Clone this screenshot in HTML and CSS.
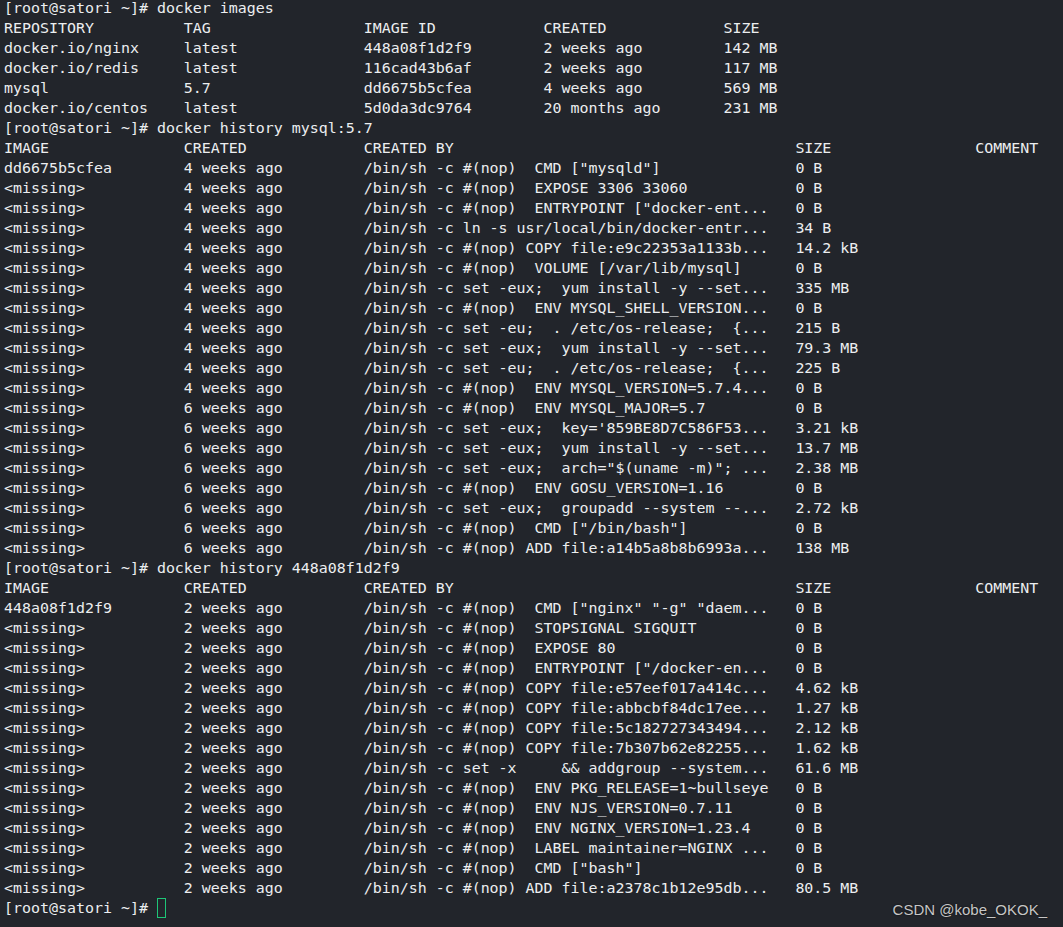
FILE: index.html
```html
<!DOCTYPE html>
<html lang="en">
<head>
  <meta charset="UTF-8" />
  <meta name="viewport" content="width=device-width, initial-scale=1.0" />
  <title>Terminal - docker</title>
  <link rel="stylesheet" href="styles.css">
</head>
<body>
  <div class="term">
    <!-- docker images -->
    <div class="line">[root@satori ~]# docker images</div>
    <div class="row images"><span>REPOSITORY</span><span>TAG</span><span>IMAGE ID</span><span>CREATED</span><span>SIZE</span></div>
    <div class="row images"><span>docker.io/nginx</span><span>latest</span><span>448a08f1d2f9</span><span>2 weeks ago</span><span>142 MB</span></div>
    <div class="row images"><span>docker.io/redis</span><span>latest</span><span>116cad43b6af</span><span>2 weeks ago</span><span>117 MB</span></div>
    <div class="row images"><span>mysql</span><span>5.7</span><span>dd6675b5cfea</span><span>4 weeks ago</span><span>569 MB</span></div>
    <div class="row images"><span>docker.io/centos</span><span>latest</span><span>5d0da3dc9764</span><span>20 months ago</span><span>231 MB</span></div>

    <!-- history mysql -->
    <div class="line">[root@satori ~]# docker history mysql:5.7</div>
    <div class="row history"><span>IMAGE</span><span>CREATED</span><span>CREATED BY</span><span>SIZE</span><span>COMMENT</span></div>
    <div class="row history"><span>dd6675b5cfea</span><span>4 weeks ago</span><span>/bin/sh -c #(nop)  CMD ["mysqld"]</span><span>0 B</span></div>
    <div class="row history"><span>&lt;missing&gt;</span><span>4 weeks ago</span><span>/bin/sh -c #(nop)  EXPOSE 3306 33060</span><span>0 B</span></div>
    <div class="row history"><span>&lt;missing&gt;</span><span>4 weeks ago</span><span>/bin/sh -c #(nop)  ENTRYPOINT ["docker-ent...</span><span>0 B</span></div>
    <div class="row history"><span>&lt;missing&gt;</span><span>4 weeks ago</span><span>/bin/sh -c ln -s usr/local/bin/docker-entr...</span><span>34 B</span></div>
    <div class="row history"><span>&lt;missing&gt;</span><span>4 weeks ago</span><span>/bin/sh -c #(nop) COPY file:e9c22353a1133b...</span><span>14.2 kB</span></div>
    <div class="row history"><span>&lt;missing&gt;</span><span>4 weeks ago</span><span>/bin/sh -c #(nop)  VOLUME [/var/lib/mysql]</span><span>0 B</span></div>
    <div class="row history"><span>&lt;missing&gt;</span><span>4 weeks ago</span><span>/bin/sh -c set -eux;  yum install -y --set...</span><span>335 MB</span></div>
    <div class="row history"><span>&lt;missing&gt;</span><span>4 weeks ago</span><span>/bin/sh -c #(nop)  ENV MYSQL_SHELL_VERSION...</span><span>0 B</span></div>
    <div class="row history"><span>&lt;missing&gt;</span><span>4 weeks ago</span><span>/bin/sh -c set -eu;  . /etc/os-release;  {...</span><span>215 B</span></div>
    <div class="row history"><span>&lt;missing&gt;</span><span>4 weeks ago</span><span>/bin/sh -c set -eux;  yum install -y --set...</span><span>79.3 MB</span></div>
    <div class="row history"><span>&lt;missing&gt;</span><span>4 weeks ago</span><span>/bin/sh -c set -eu;  . /etc/os-release;  {...</span><span>225 B</span></div>
    <div class="row history"><span>&lt;missing&gt;</span><span>4 weeks ago</span><span>/bin/sh -c #(nop)  ENV MYSQL_VERSION=5.7.4...</span><span>0 B</span></div>
    <div class="row history"><span>&lt;missing&gt;</span><span>6 weeks ago</span><span>/bin/sh -c #(nop)  ENV MYSQL_MAJOR=5.7</span><span>0 B</span></div>
    <div class="row history"><span>&lt;missing&gt;</span><span>6 weeks ago</span><span>/bin/sh -c set -eux;  key='859BE8D7C586F53...</span><span>3.21 kB</span></div>
    <div class="row history"><span>&lt;missing&gt;</span><span>6 weeks ago</span><span>/bin/sh -c set -eux;  yum install -y --set...</span><span>13.7 MB</span></div>
    <div class="row history"><span>&lt;missing&gt;</span><span>6 weeks ago</span><span>/bin/sh -c set -eux;  arch="$(uname -m)"; ...</span><span>2.38 MB</span></div>
    <div class="row history"><span>&lt;missing&gt;</span><span>6 weeks ago</span><span>/bin/sh -c #(nop)  ENV GOSU_VERSION=1.16</span><span>0 B</span></div>
    <div class="row history"><span>&lt;missing&gt;</span><span>6 weeks ago</span><span>/bin/sh -c set -eux;  groupadd --system --...</span><span>2.72 kB</span></div>
    <div class="row history"><span>&lt;missing&gt;</span><span>6 weeks ago</span><span>/bin/sh -c #(nop)  CMD ["/bin/bash"]</span><span>0 B</span></div>
    <div class="row history"><span>&lt;missing&gt;</span><span>6 weeks ago</span><span>/bin/sh -c #(nop) ADD file:a14b5a8b8b6993a...</span><span>138 MB</span></div>

    <!-- history nginx -->
    <div class="line">[root@satori ~]# docker history 448a08f1d2f9</div>
    <div class="row history"><span>IMAGE</span><span>CREATED</span><span>CREATED BY</span><span>SIZE</span><span>COMMENT</span></div>
    <div class="row history"><span>448a08f1d2f9</span><span>2 weeks ago</span><span>/bin/sh -c #(nop)  CMD ["nginx" "-g" "daem...</span><span>0 B</span></div>
    <div class="row history"><span>&lt;missing&gt;</span><span>2 weeks ago</span><span>/bin/sh -c #(nop)  STOPSIGNAL SIGQUIT</span><span>0 B</span></div>
    <div class="row history"><span>&lt;missing&gt;</span><span>2 weeks ago</span><span>/bin/sh -c #(nop)  EXPOSE 80</span><span>0 B</span></div>
    <div class="row history"><span>&lt;missing&gt;</span><span>2 weeks ago</span><span>/bin/sh -c #(nop)  ENTRYPOINT ["/docker-en...</span><span>0 B</span></div>
    <div class="row history"><span>&lt;missing&gt;</span><span>2 weeks ago</span><span>/bin/sh -c #(nop) COPY file:e57eef017a414c...</span><span>4.62 kB</span></div>
    <div class="row history"><span>&lt;missing&gt;</span><span>2 weeks ago</span><span>/bin/sh -c #(nop) COPY file:abbcbf84dc17ee...</span><span>1.27 kB</span></div>
    <div class="row history"><span>&lt;missing&gt;</span><span>2 weeks ago</span><span>/bin/sh -c #(nop) COPY file:5c182727343494...</span><span>2.12 kB</span></div>
    <div class="row history"><span>&lt;missing&gt;</span><span>2 weeks ago</span><span>/bin/sh -c #(nop) COPY file:7b307b62e82255...</span><span>1.62 kB</span></div>
    <div class="row history"><span>&lt;missing&gt;</span><span>2 weeks ago</span><span>/bin/sh -c set -x     &amp;&amp; addgroup --system...</span><span>61.6 MB</span></div>
    <div class="row history"><span>&lt;missing&gt;</span><span>2 weeks ago</span><span>/bin/sh -c #(nop)  ENV PKG_RELEASE=1~bullseye</span><span>0 B</span></div>
    <div class="row history"><span>&lt;missing&gt;</span><span>2 weeks ago</span><span>/bin/sh -c #(nop)  ENV NJS_VERSION=0.7.11</span><span>0 B</span></div>
    <div class="row history"><span>&lt;missing&gt;</span><span>2 weeks ago</span><span>/bin/sh -c #(nop)  ENV NGINX_VERSION=1.23.4</span><span>0 B</span></div>
    <div class="row history"><span>&lt;missing&gt;</span><span>2 weeks ago</span><span>/bin/sh -c #(nop)  LABEL maintainer=NGINX ...</span><span>0 B</span></div>
    <div class="row history"><span>&lt;missing&gt;</span><span>2 weeks ago</span><span>/bin/sh -c #(nop)  CMD ["bash"]</span><span>0 B</span></div>
    <div class="row history"><span>&lt;missing&gt;</span><span>2 weeks ago</span><span>/bin/sh -c #(nop) ADD file:a2378c1b12e95db...</span><span>80.5 MB</span></div>

    <div class="line">[root@satori ~]# <span class="cursor"></span></div>
  </div>

  <!-- blog watermark -->
  <div class="watermark">CSDN @kobe_OKOK_</div>
</body>
</html>
```

FILE: styles.css
```css
/* Terminal window */
body {
  margin: 0;
  height: 927px;
  background-color: #22252b;
  overflow: hidden;
  position: relative;
}

.term {
  margin-top: -2px;
  padding: 0 0 0 4px;
  font-family: 'DejaVu Sans Mono', 'Liberation Mono', monospace;
  font-size: 14.95px;
  line-height: 20px;
  color: #eceef0;
}

.line,
.row span {
  white-space: pre;
}

.line {
  height: 20px;
}

/* Column layouts (docker tabwriter widths) */
.row {
  display: grid;
  height: 20px;
}

.images {
  grid-template-columns: 20ch 20ch 20ch 20ch auto;
}

.history {
  grid-template-columns: 20ch 20ch 48ch 20ch auto;
}

.cursor {
  display: inline-block;
  width: 7px;
  height: 18px;
  border: 1.5px solid #1ec577;
  vertical-align: -5px;
}

/* CSDN watermark */
.watermark {
  position: absolute;
  right: 16px;
  bottom: 9px;
  font-family: 'Liberation Sans', Arial, sans-serif;
  font-size: 15px;
  color: #c6c6c6;
  text-shadow: 0 0 2px rgba(0, 0, 0, 0.7);
}
```
